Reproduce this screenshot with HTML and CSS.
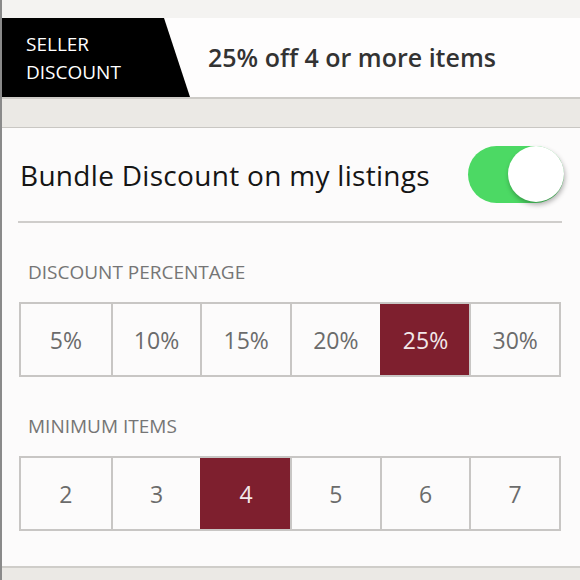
FILE: index.html
```html
<!DOCTYPE html>
<html lang="en">
<head>
    <meta charset="UTF-8">
    <meta name="viewport" content="width=device-width, initial-scale=1.0">
    <title>Seller Discount</title>
    <link rel="stylesheet" href="styles.css">
</head>
<body>
    <div class="page">
        <div class="top-strip"></div>
        <div class="banner">
            <div class="tag">SELLER<br>DISCOUNT</div>
            <div class="summary">25% off 4 or more items</div>
        </div>
        <div class="band"></div>

        <div class="panel">
            <div class="toggle-row">
                <span class="toggle-label">Bundle Discount on my listings</span>
                <div class="switch on"><div class="knob"></div></div>
            </div>

            <div class="section-label">DISCOUNT PERCENTAGE</div>
            <div class="options">
                <div class="option">5%</div>
                <div class="option">10%</div>
                <div class="option">15%</div>
                <div class="option">20%</div>
                <div class="option selected">25%</div>
                <div class="option">30%</div>
            </div>

            <div class="section-label">MINIMUM ITEMS</div>
            <div class="options">
                <div class="option">2</div>
                <div class="option">3</div>
                <div class="option selected">4</div>
                <div class="option">5</div>
                <div class="option">6</div>
                <div class="option">7</div>
            </div>
        </div>

        <div class="band bottom"></div>
    </div>
</body>
</html>
```

FILE: styles.css
```css
body {
    margin: 0;
    font-family: "Open Sans", Lato, sans-serif;
    background-color: #f3f2f0;
}

.page {
    height: 580px;
    border-left: 2px solid #8a8a8a;
    display: flex;
    flex-direction: column;
    overflow: hidden;
}

.top-strip {
    height: 18px;
    background-color: #f4f3f1;
}

.banner {
    height: 79px;
    display: flex;
    align-items: center;
    background-color: #fefdfd;
    border-bottom: 2px solid #cdcbc7;
}

.tag {
    width: 190px;
    height: 100%;
    box-sizing: border-box;
    padding: 12px 0 0 26px;
    margin-left: -2px;
    background-color: #000;
    color: #fff;
    font-size: 19px;
    line-height: 28px;
    clip-path: polygon(0 0, 164px 0, 190px 100%, 0 100%);
}

.summary {
    margin-left: 18px;
    margin-bottom: 2px;
    font-size: 25px;
    font-weight: 600;
    color: #333;
}

.band {
    height: 28px;
    background-color: #ebe9e5;
    border-bottom: 1px solid #c9c7c3;
}

.band.bottom {
    flex: 1;
    border-top: 2px solid #cfcdc9;
    border-bottom: none;
}

.panel {
    height: 438px;
    padding: 0 18px 0 16px;
    background-color: #fcfbfb;
}

.toggle-row {
    height: 93px;
    display: flex;
    align-items: center;
    justify-content: space-between;
    border-bottom: 2px solid #cfcdcb;
}

.toggle-label {
    margin-left: 2px;
    font-size: 28px;
    letter-spacing: 0.3px;
    color: #151515;
}

.switch {
    width: 96px;
    height: 57px;
    margin-right: -2px;
    margin-top: -1px;
    border-radius: 29px;
    background-color: #4cd964;
    display: flex;
    justify-content: flex-end;
}

.knob {
    width: 56px;
    height: 56px;
    border-radius: 50%;
    background-color: #fff;
    box-shadow: 1px 3px 5px rgba(0, 0, 0, 0.3);
}

.section-label {
    margin: 36px 0 0 10px;
    height: 26px;
    font-size: 19px;
    color: #757575;
}

.options {
    margin: 17px 1px 0;
    display: grid;
    grid-template-columns: repeat(6, 1fr);
    border: 2px solid #c8c6c4;
    background-color: #fcfbfb;
}

.option {
    height: 71px;
    display: flex;
    align-items: center;
    justify-content: center;
    font-size: 23px;
    color: #6b6b6b;
    border-left: 2px solid #c8c6c4;
}

.option:first-child {
    border-left: none;
}

.option.selected {
    background-color: #7e1f2e;
    color: #f3e8ea;
    border-left-color: #7e1f2e;
}
```
